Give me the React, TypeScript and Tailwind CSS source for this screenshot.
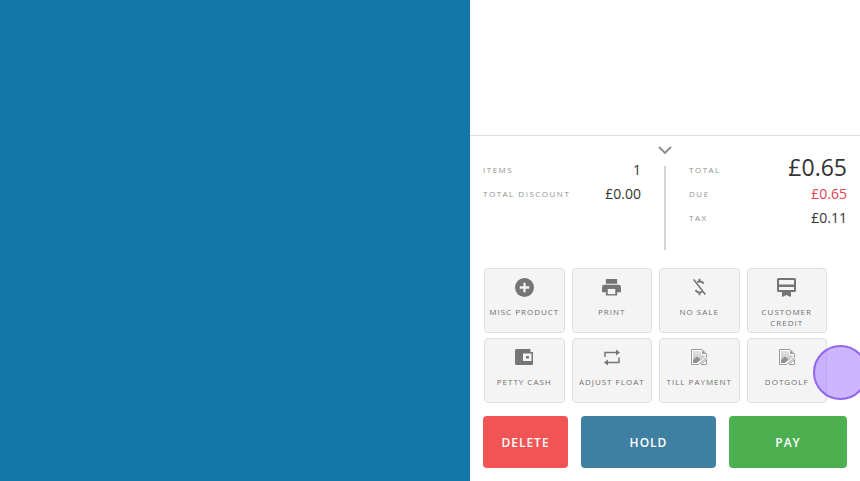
import React from "react";

function Plus() {
  return (
    <svg width="19" height="19" viewBox="0 0 20 20">
      <circle cx="10" cy="10" r="10" fill="#757575" />
      <path d="M10 5v10M5 10h10" stroke="#f4f4f4" strokeWidth="2.4" />
    </svg>
  );
}
function Printer() {
  return (
    <svg width="19" height="17" viewBox="0 0 20 18">
      <path fill="#757575" d="M4 0h12v5H4zM2.500 6h15A2.500 2.500 0 0 1 20 8.500V14h-4v3.500H4V14H0V8.500A2.500 2.500 0 0 1 2.500 6z" />
      <path fill="#f4f4f4" d="M6 10.500h8v5.500H6z" />
    </svg>
  );
}
function NoDollar() {
  return (
    <svg width="15" height="18" viewBox="0 0 18 20" fill="none" stroke="#757575" strokeWidth="2.200">
      <path d="M2 1l14 18" strokeWidth="1.800" />
      <path d="M9 0v3.500M9 16.500v3.500" />
      <path d="M13.500 6C13 4.200 11.200 3.400 9 3.400c-1 0-2 .2-2.700.7M4.500 13.500c.5 2.200 2.300 3.100 4.500 3.100 1.300 0 2.500-.3 3.200-1" />
    </svg>
  );
}
function Credit() {
  return (
    <svg width="19" height="19" viewBox="0 0 19 19">
      <path fill="#757575" fillRule="evenodd" d="M1.500 0h16A1.500 1.500 0 0 1 19 1.500v11a1.500 1.500 0 0 1-1.500 1.500H14v5l-4.500-2-4.500 2v-5H1.500A1.500 1.500 0 0 1 0 12.500v-11A1.500 1.500 0 0 1 1.500 0zM2 2v4.500h15V2zM2 9v3h15V9z" />
    </svg>
  );
}
function Wallet() {
  return (
    <svg width="18" height="16" viewBox="0 0 18 16">
      <path fill="#757575" fillRule="evenodd" d="M1.500 0H15.500V3H18V14.500A1.500 1.500 0 0 1 16.500 16H1.500A1.500 1.500 0 0 1 0 14.500V1.500A1.500 1.500 0 0 1 1.500 0zM8 4.500V12H16.500V4.500z" />
      <path fill="#757575" d="M11 7h3v2.500h-3z" />
    </svg>
  );
}
function Repeat() {
  return (
    <svg width="16" height="17" viewBox="0 0 16 17" fill="none" stroke="#757575" strokeWidth="1.500">
      <path d="M1 8V3.500h12" />
      <path d="M15 8.500v5H3" />
      <path fill="#757575" stroke="none" d="M12 0.500l4 3-4 3zM4 10.500l-4 3 4 3z" />
    </svg>
  );
}
function Broken() {
  return (
    <svg width="16" height="16" viewBox="0 0 16 16">
      <defs>
        <linearGradient id="brokenSky" x1="0" y1="0" x2="0" y2="1">
          <stop offset="0" stopColor="#e4e4e4" />
          <stop offset="1" stopColor="#c4c4c4" />
        </linearGradient>
      </defs>
      <path fill="#fdfdfd" stroke="#9a9a9a" strokeWidth="1" d="M0.500 0.500h10.500l4.500 4.500v3.500l-8 7h-7z" />
      <path fill="url(#brokenSky)" d="M2 2h8v4h4v2L9 12H2z" />
      <path fill="#8f8f8f" d="M2 14V11l4-3.500 3.500 3L6 14z" />
      <path fill="#9a9a9a" d="M11 1l4 4h-4z" />
      <path fill="#fdfdfd" stroke="#9a9a9a" strokeWidth="1" d="M15.500 10.500v5h-5.500z" />
    </svg>
  );
}

function Tile({ icon, label }: { icon: React.ReactNode; label: React.ReactNode }) {
  return (
    <div className="h-[65px] w-[80.500px] shrink-0 rounded-[4px] border border-[#e0e0e0] bg-[#f4f4f4] flex flex-col items-center">
      <div className="h-[36px] flex items-center justify-center">{icon}</div>
      <div className="text-[8px] leading-[11px] tracking-[1px] text-[#6f6f6f] text-center mt-[1px] whitespace-nowrap">{label}</div>
    </div>
  );
}

function Row({ label, value, valueClass }: { label: string; value: string; valueClass: string }) {
  return (
    <div className="flex items-center justify-between h-[24px]">
      <span className="text-[8px] tracking-[1.500px] text-[#8f8f8f]">{label}</span>
      <span className={valueClass}>{value}</span>
    </div>
  );
}

export default function App() {
  return (
    <div className="relative flex h-[481px] w-[860px] overflow-hidden bg-white" style={{ fontFamily: '"Open Sans", sans-serif' }}>
      <div className="w-[470px] bg-[#1176a8]" />
      <div className="flex-1 flex flex-col">
        <div className="h-[136px] border-b border-[#dddddd]" />
        <div className="relative h-[132px] flex pl-[13px] pr-[13px]">
          <svg className="absolute left-[188px] top-[10px]" width="14" height="9" viewBox="0 0 14 9" fill="none" stroke="#8a8a8a" strokeWidth="1.800">
            <path d="M1 1l6 6 6-6" />
          </svg>
          <div className="w-[158px] pt-[22px]">
            <Row label="ITEMS" value="1" valueClass="text-[14px] leading-[20px] text-[#333]" />
            <Row label="TOTAL DISCOUNT" value="£0.00" valueClass="text-[14px] leading-[20px] text-[#333]" />
          </div>
          <div className="ml-[23px] mt-[30px] h-[84px] w-[2px] bg-[#d4d4d4]" />
          <div className="ml-[23px] flex-1 pt-[22px]">
            <Row label="TOTAL" value="£0.65" valueClass="text-[23px] leading-[24px] mb-[6px] text-[#333]" />
            <Row label="DUE" value="£0.65" valueClass="text-[14px] leading-[20px] text-[#e8414f]" />
            <Row label="TAX" value="£0.11" valueClass="text-[14px] leading-[20px] text-[#333]" />
          </div>
        </div>
        <div className="pl-[14px] flex flex-col gap-[5px]">
          <div className="flex gap-[7px]">
            <Tile icon={<Plus />} label="MISC PRODUCT" />
            <Tile icon={<Printer />} label="PRINT" />
            <Tile icon={<NoDollar />} label="NO SALE" />
            <Tile icon={<Credit />} label={<>CUSTOMER<br />CREDIT</>} />
          </div>
          <div className="flex gap-[7px]">
            <Tile icon={<Wallet />} label="PETTY CASH" />
            <Tile icon={<Repeat />} label="ADJUST FLOAT" />
            <Tile icon={<Broken />} label="TILL PAYMENT" />
            <Tile icon={<Broken />} label="DOTGOLF" />
          </div>
        </div>
        <div className="mt-[13px] pl-[13px] flex gap-[13px] text-white text-[12px] font-semibold tracking-[1px]">
          <div className="h-[52px] w-[85px] pt-[1px] rounded-[4px] bg-[#f05454] flex items-center justify-center">DELETE</div>
          <div className="h-[52px] w-[135px] pt-[1px] rounded-[4px] bg-[#3f80a2] flex items-center justify-center">HOLD</div>
          <div className="h-[52px] w-[118px] pt-[1px] rounded-[4px] bg-[#4caf50] flex items-center justify-center">PAY</div>
        </div>
      </div>
      <div className="absolute left-[813px] top-[345px] h-[55px] w-[55px] rounded-full border-[2.500px] border-[#9266ee] bg-[#9b6bff]/50" />
    </div>
  );
}
